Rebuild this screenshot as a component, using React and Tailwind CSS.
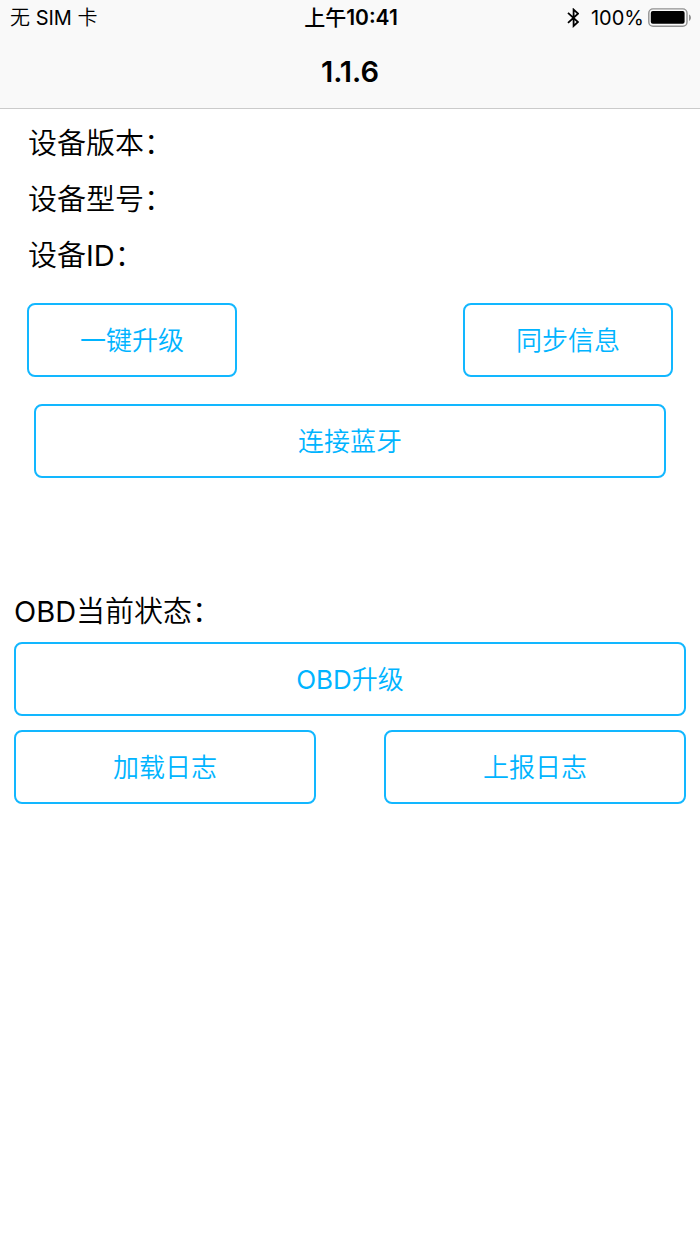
import React from "react";

function ActionButton({ className = "", children }) {
  return (
    <button
      type="button"
      className={`h-[74px] rounded-lg border-2 border-[#12b7ff] bg-white pt-px text-[26px] font-[350] text-[#00b4ff] ${className}`}
    >
      {children}
    </button>
  );
}

function Latin({ children }) {
  return <span className="font-normal">{children}</span>;
}

function BluetoothIcon() {
  return (
    <svg
      viewBox="0 0 12 20"
      className="h-5 w-3"
      fill="none"
      stroke="#000"
      strokeWidth="1.8"
      aria-hidden="true"
    >
      <path d="M1 4.8 L11 14 L6.6 18 V1.6 L11 5.6 L1 14.8" />
    </svg>
  );
}

function BatteryIcon() {
  return (
    <svg viewBox="0 0 44 20" className="h-5 w-11" aria-hidden="true">
      <rect x="0.8" y="0.9" width="38.2" height="17.4" rx="4.2" fill="none" stroke="#919191" strokeWidth="1.4" />
      <rect x="2.8" y="3" width="33.8" height="12.8" rx="2" fill="#000" />
      <path d="M41 6.4 C43.6 7.4 43.6 11.8 41 12.8 Z" fill="#919191" />
    </svg>
  );
}

function StatusBar() {
  return (
    <div className="grid h-9 grid-cols-3 items-center pl-[10px] pr-2 text-[20px] leading-9">
      <span className="font-[350]">
        无 <Latin>SIM</Latin> 卡
      </span>
      <span className="text-center text-[21px] font-semibold">
        <span className="font-medium">上午</span>10:41
      </span>
      <span className="flex items-center justify-end">
        <BluetoothIcon />
        <span className="ml-3 mr-1">100%</span>
        <BatteryIcon />
      </span>
    </div>
  );
}

export default function App() {
  return (
    <div className="min-h-screen bg-white font-['Inter','Noto_Sans_CJK_SC',sans-serif] text-black">
      <header className="border-b border-[#cbcbcb] bg-[#f9f9f9]">
        <StatusBar />
        <h1 className="text-center text-[29px] font-semibold leading-[72px]">1.1.6</h1>
      </header>
      <main>
        <section className="px-7 pt-[7px] text-[29px] font-[350] leading-[56px]">
          <p>设备版本：</p>
          <p>设备型号：</p>
          <p>
            设备<Latin>ID</Latin>：
          </p>
        </section>
        <section className="px-[27px] pt-[19px]">
          <div className="flex justify-between">
            <ActionButton className="w-[210px]">一键升级</ActionButton>
            <ActionButton className="w-[210px]">同步信息</ActionButton>
          </div>
          <div className="flex px-[7px] pt-[27px]">
            <ActionButton className="flex-1">连接蓝牙</ActionButton>
          </div>
        </section>
        <section className="mt-[111px] px-[14px]">
          <p className="mb-[7px] text-[29px] font-[350] leading-[46px]">
            <Latin>OBD</Latin>当前状态：
          </p>
          <div className="flex">
            <ActionButton className="flex-1">
              <Latin>OBD</Latin>升级
            </ActionButton>
          </div>
          <div className="mt-[14px] grid grid-cols-2 gap-[68px]">
            <ActionButton>加载日志</ActionButton>
            <ActionButton>上报日志</ActionButton>
          </div>
        </section>
      </main>
    </div>
  );
}
